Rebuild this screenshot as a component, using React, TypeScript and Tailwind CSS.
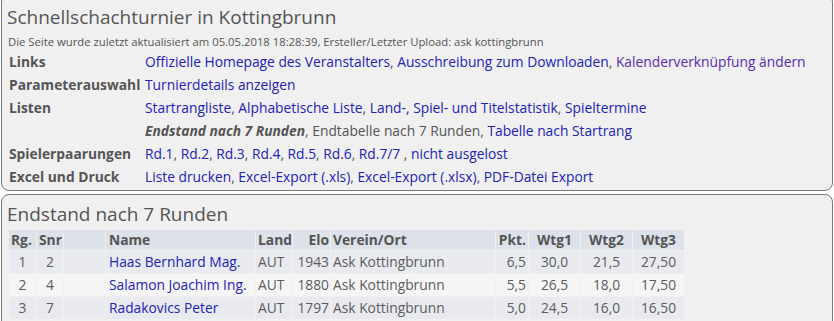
import React from "react"

const font = { fontFamily: '"Open Sans", "Noto Sans", sans-serif' }

interface Player {
  rg: number
  snr: number
  name: string
  land: string
  elo: number
  verein: string
  pkt: string
  wtg1: string
  wtg2: string
  wtg3: string
}

const players: Player[] = [
  { rg: 1, snr: 2, name: "Haas Bernhard Mag.", land: "AUT", elo: 1943, verein: "Ask Kottingbrunn", pkt: "6,5", wtg1: "30,0", wtg2: "21,5", wtg3: "27,50" },
  { rg: 2, snr: 4, name: "Salamon Joachim Ing.", land: "AUT", elo: 1880, verein: "Ask Kottingbrunn", pkt: "5,5", wtg1: "26,5", wtg2: "18,0", wtg3: "17,50" },
  { rg: 3, snr: 7, name: "Radakovics Peter", land: "AUT", elo: 1797, verein: "Ask Kottingbrunn", pkt: "5,0", wtg1: "24,5", wtg2: "16,0", wtg3: "16,50" },
]

function L({ children, visited }: { children: React.ReactNode; visited?: boolean }) {
  return <a className={visited ? "text-[#5a2bb0]" : "text-[#2323b8]"}>{children}</a>
}

export default function App() {
  return (
    <div className="w-[834px] h-[321px] overflow-hidden bg-white text-[#555] text-[13.8px]" style={font}>
      <div className="mx-[1px] mt-[-6px] rounded-[8px] border border-[#7a7a7a] bg-[#f0f0f0] px-[5px] pt-[9px] h-[197px]">
        <h1 className="text-[19px] leading-[26px] text-[#555]">Schnellschachturnier in Kottingbrunn</h1>
        <div className="text-[11.3px] leading-[16px] pl-[1px] mt-[4px]">
          Die Seite wurde zuletzt aktualisiert am 05.05.2018 18:28:39, Ersteller/Letzter Upload: ask kottingbrunn
        </div>
        <div className="grid grid-cols-[136px_1fr] leading-[23px] pl-[2px]">
          <div className="font-bold">Links</div>
          <div>
            <L>Offizielle Homepage des Veranstalters</L>, <L>Ausschreibung zum Downloaden</L>, <L visited>Kalenderverknüpfung ändern</L>
          </div>
          <div className="font-bold">Parameterauswahl</div>
          <div><L>Turnierdetails anzeigen</L></div>
          <div className="font-bold">Listen</div>
          <div>
            <L>Startrangliste</L>, <L>Alphabetische Liste</L>, <L>Land-, Spiel- und Titelstatistik</L>, <L>Spieltermine</L>
          </div>
          <div />
          <div>
            <b className="italic">Endstand nach 7 Runden</b>, <span>Endtabelle nach 7 Runden</span>, <L>Tabelle nach Startrang</L>
          </div>
          <div className="font-bold">Spielerpaarungen</div>
          <div>
            <L>Rd.1</L>, <L>Rd.2</L>, <L>Rd.3</L>, <L>Rd.4</L>, <L>Rd.5</L>, <L>Rd.6</L>, <L>Rd.7/7</L> , <L>nicht ausgelost</L>
          </div>
          <div className="font-bold">Excel und Druck</div>
          <div>
            <L>Liste drucken</L>, <L>Excel-Export (.xls)</L>, <L>Excel-Export (.xlsx)</L>, <L>PDF-Datei Export</L>
          </div>
        </div>
      </div>

      <div className="mx-[1px] mt-[3px] rounded-[8px] border border-[#7a7a7a] bg-[#f0f0f0] px-[5px] pt-[7px] h-[140px]">
        <h2 className="text-[19px] leading-[24px] text-[#555]">Endstand nach 7 Runden</h2>
        <table className="border-separate border-spacing-[1px] ml-[1px] mt-[3px]">
          <thead>
            <tr className="bg-[#dde1e9] font-bold leading-[20px]">
              <th className="w-[27px] text-left pl-[2px]">Rg.</th>
              <th className="w-[26px] text-left pl-[2px]">Snr</th>
              <th className="w-[41px]"></th>
              <th className="w-[149px] text-left pl-[3px]">Name</th>
              <th className="w-[36px] text-left pl-[2px]">Land</th>
              <th className="w-[37px] text-right pr-[1px]">Elo</th>
              <th className="w-[164px] text-left pl-[2px]">Verein/Ort</th>
              <th className="w-[32px] text-right pr-[2px]">Pkt.</th>
              <th className="w-[51px] text-center">Wtg1</th>
              <th className="w-[51px] text-center">Wtg2</th>
              <th className="w-[51px] text-center">Wtg3</th>
            </tr>
          </thead>
          <tbody>
            {players.map((p, i) => (
              <tr key={p.rg} className={(i % 2 === 0 ? "bg-[#e8eaf0]" : "bg-[#f5f5f5]") + " leading-[22px] text-[#5c5c5c]"}>
                <td className="text-center">{p.rg}</td>
                <td className="text-center">{p.snr}</td>
                <td></td>
                <td className="pl-[3px]"><L>{p.name}</L></td>
                <td className="pl-[2px]">{p.land}</td>
                <td className="text-right pr-[1px]">{p.elo}</td>
                <td className="pl-[2px]">{p.verein}</td>
                <td className="text-right pr-[2px]">{p.pkt}</td>
                <td className="text-center">{p.wtg1}</td>
                <td className="text-center">{p.wtg2}</td>
                <td className="text-center">{p.wtg3}</td>
              </tr>
            ))}
          </tbody>
        </table>
      </div>
    </div>
  )
}
